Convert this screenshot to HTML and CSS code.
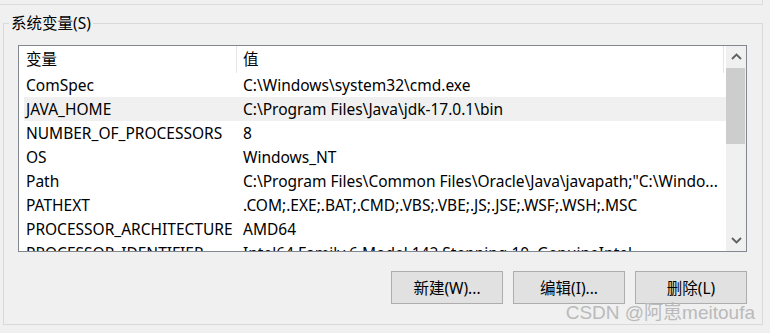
FILE: index.html
```html
<!DOCTYPE html>
<html lang="zh-CN">
<head>
    <meta charset="UTF-8">
    <title>系统变量</title>
    <link rel="stylesheet" href="styles.css">
</head>
<body>
    <div class="prev-group"></div>

    <fieldset class="group">
        <legend>系统变量(S)</legend>

        <div class="listview">
            <div class="list-main">
                <div class="list-head">
                    <div class="head-cell">变量</div>
                    <div class="head-cell">值</div>
                </div>
                <div class="row"><span class="cell-name">ComSpec</span><span class="cell-value">C:\Windows\system32\cmd.exe</span></div>
                <div class="row selected"><span class="cell-name">JAVA_HOME</span><span class="cell-value">C:\Program Files\Java\jdk-17.0.1\bin</span></div>
                <div class="row"><span class="cell-name">NUMBER_OF_PROCESSORS</span><span class="cell-value">8</span></div>
                <div class="row"><span class="cell-name">OS</span><span class="cell-value">Windows_NT</span></div>
                <div class="row"><span class="cell-name">Path</span><span class="cell-value">C:\Program Files\Common Files\Oracle\Java\javapath;"C:\Windo...</span></div>
                <div class="row"><span class="cell-name">PATHEXT</span><span class="cell-value">.COM;.EXE;.BAT;.CMD;.VBS;.VBE;.JS;.JSE;.WSF;.WSH;.MSC</span></div>
                <div class="row"><span class="cell-name">PROCESSOR_ARCHITECTURE</span><span class="cell-value">AMD64</span></div>
                <div class="row"><span class="cell-name">PROCESSOR_IDENTIFIER</span><span class="cell-value">Intel64 Family 6 Model 142 Stepping 10, GenuineIntel</span></div>
            </div>
            <div class="scrollbar">
                <div class="sb-arrow">
                    <svg width="11" height="7" viewBox="0 0 11 7"><polyline points="1,6 5.5,1.5 10,6" fill="none" stroke="#606060" stroke-width="1.8"/></svg>
                </div>
                <div class="sb-track"><div class="sb-thumb"></div></div>
                <div class="sb-arrow">
                    <svg width="11" height="7" viewBox="0 0 11 7"><polyline points="1,1 5.5,5.5 10,1" fill="none" stroke="#606060" stroke-width="1.8"/></svg>
                </div>
            </div>
        </div>

        <div class="buttons">
            <button type="button">新建(W)...</button>
            <button type="button">编辑(I)...</button>
            <button type="button">删除(L)</button>
        </div>
    </fieldset>

    <div class="watermark">CSDN @阿崽meitoufa</div>
</body>
</html>
```

FILE: styles.css
```css
body {
    margin: 0;
    padding: 0;
    background-color: #f0f0f0;
    font-family: "Noto Sans", "Noto Sans CJK SC", sans-serif;
    font-size: 15.5px;
    color: #000;
    position: relative;
    height: 333px;
    overflow: hidden;
}

.prev-group {
    width: 762px;
    height: 4px;
    border-bottom: 1px solid #dcdcdc;
    border-right: 1px solid #dcdcdc;
}

.group {
    margin: 8px 7px 0 3px;
    padding: 0 15px 20px 14px;
    border: 1px solid #d9d9d9;
    min-width: 0;
}

.group legend {
    margin-left: -9px;
    padding: 0 2px;
    line-height: 20px;
}

.listview {
    margin-top: 12px;
    height: 207px;
    box-sizing: border-box;
    border: 1px solid #828790;
    background-color: #fff;
    display: flex;
}

.list-main {
    flex: 1;
    overflow: hidden;
}

.list-head {
    display: grid;
    grid-template-columns: 218px 487px;
    height: 27px;
}

.head-cell {
    border-right: 1px solid #e5e5e5;
    padding-left: 7px;
    line-height: 26px;
}

.head-cell + .head-cell {
    padding-left: 6px;
}

.row {
    display: grid;
    grid-template-columns: 212px 1fr;
    margin-left: 5px;
    height: 24px;
    line-height: 24px;
}

.row.selected {
    background-color: #f0f0f0;
}

.cell-name {
    padding-left: 2px;
    white-space: nowrap;
}

.cell-value {
    padding-left: 7px;
    white-space: nowrap;
    overflow: hidden;
}

.scrollbar {
    width: 20px;
    flex: none;
    background-color: #f0f0f0;
    display: flex;
    flex-direction: column;
}

.sb-arrow {
    height: 21px;
    display: flex;
    align-items: center;
    justify-content: center;
}

.sb-track {
    flex: 1;
}

.sb-thumb {
    margin: 1px 1px 0 0;
    height: 76px;
    background-color: #cdcdcd;
}

.buttons {
    margin-top: 19px;
    display: flex;
    justify-content: flex-end;
    gap: 10px;
}

button {
    width: 112px;
    height: 33px;
    background-color: #e1e1e1;
    border: 1px solid #adadad;
    border-radius: 0;
    font-family: inherit;
    font-size: 15.5px;
    color: #000;
    padding: 0;
}

.watermark {
    position: absolute;
    right: 15px;
    top: 301px;
    font-family: "Liberation Sans", "Noto Sans CJK SC", sans-serif;
    font-size: 19px;
    line-height: 24px;
    color: #bababa;
    white-space: nowrap;
}
```
